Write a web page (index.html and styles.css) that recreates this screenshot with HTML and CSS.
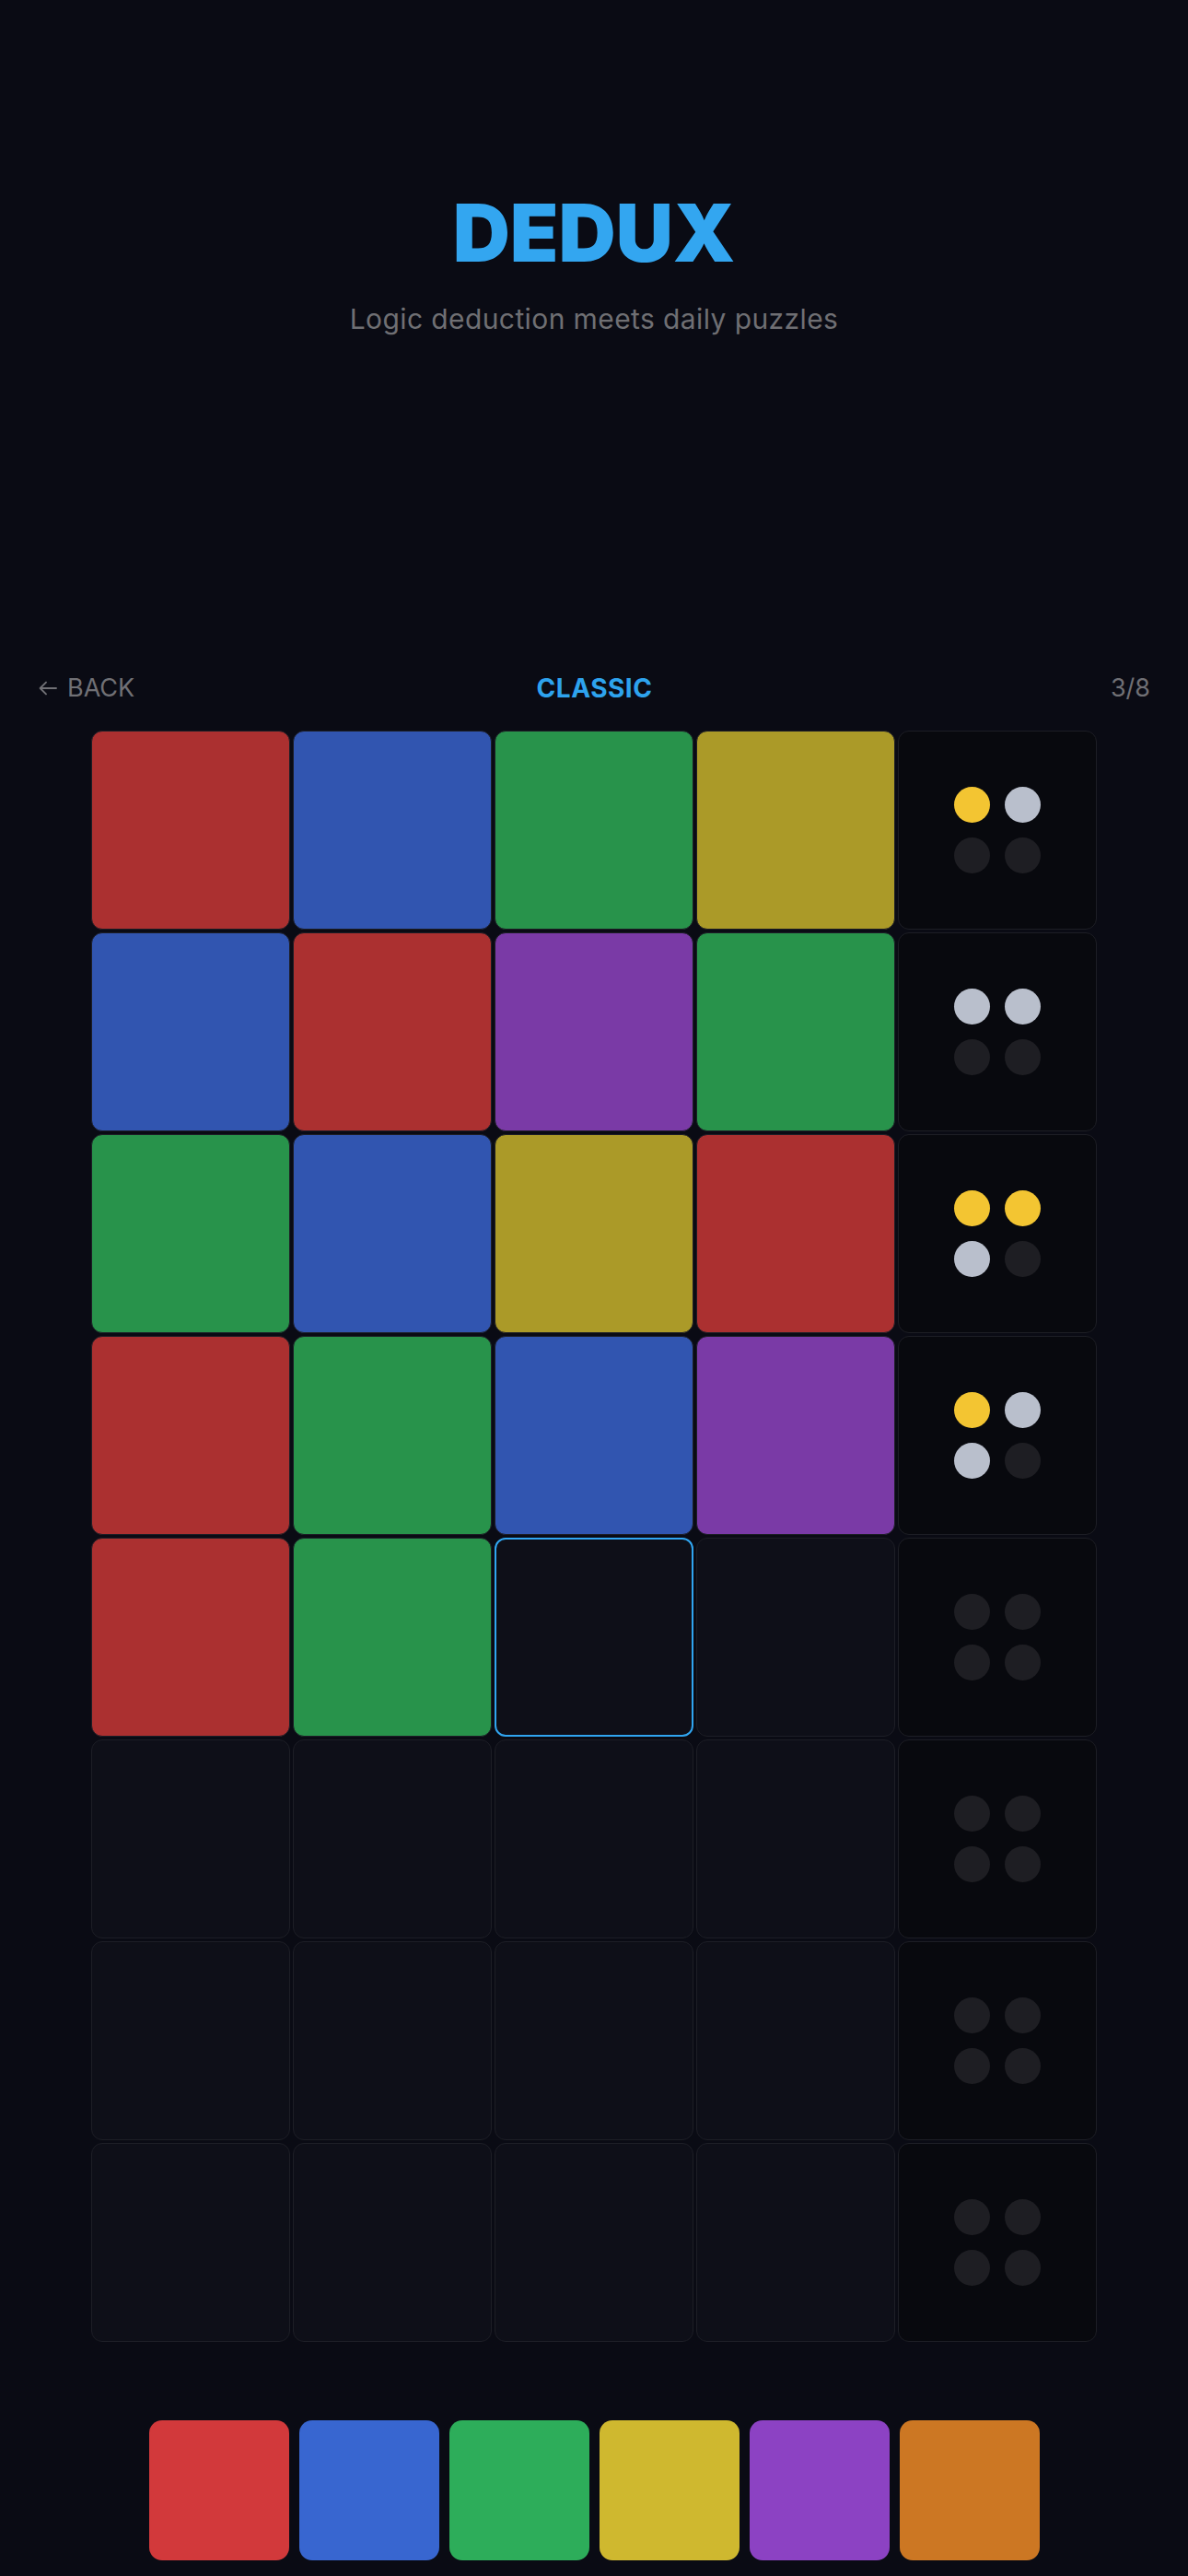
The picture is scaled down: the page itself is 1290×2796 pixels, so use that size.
FILE: index.html
```
<!DOCTYPE html>
<html lang="en">
<head>
<meta charset="utf-8">
<title>DEDUX</title>
<link rel="stylesheet" href="styles.css">
</head>
<body>
<main class="app">
  <header class="hero">
    <h1 class="title">DEDUX</h1>
    <p class="subtitle">Logic deduction meets daily puzzles</p>
  </header>

  <nav class="topbar">
    <span class="back">
      <svg class="back-icon" viewBox="0 0 20 16" width="20" height="16" aria-hidden="true">
        <path d="M19 8H1.8M8 1.6L1.6 8L8 14.4" fill="none" stroke="currentColor" stroke-width="1.9" stroke-linecap="round" stroke-linejoin="round"/>
      </svg>
      BACK
    </span>
    <span class="mode">CLASSIC</span>
    <span class="progress">3/8</span>
  </nav>

  <section class="board">
    <div class="cell red"></div><div class="cell blue"></div><div class="cell green"></div><div class="cell yellow"></div>
    <div class="feedback"><span class="dot exact"></span><span class="dot near"></span><span class="dot"></span><span class="dot"></span></div>

    <div class="cell blue"></div><div class="cell red"></div><div class="cell purple"></div><div class="cell green"></div>
    <div class="feedback"><span class="dot near"></span><span class="dot near"></span><span class="dot"></span><span class="dot"></span></div>

    <div class="cell green"></div><div class="cell blue"></div><div class="cell yellow"></div><div class="cell red"></div>
    <div class="feedback"><span class="dot exact"></span><span class="dot exact"></span><span class="dot near"></span><span class="dot"></span></div>

    <div class="cell red"></div><div class="cell green"></div><div class="cell blue"></div><div class="cell purple"></div>
    <div class="feedback"><span class="dot exact"></span><span class="dot near"></span><span class="dot near"></span><span class="dot"></span></div>

    <div class="cell red"></div><div class="cell green"></div><div class="cell empty selected"></div><div class="cell empty"></div>
    <div class="feedback"><span class="dot"></span><span class="dot"></span><span class="dot"></span><span class="dot"></span></div>

    <div class="cell empty"></div><div class="cell empty"></div><div class="cell empty"></div><div class="cell empty"></div>
    <div class="feedback"><span class="dot"></span><span class="dot"></span><span class="dot"></span><span class="dot"></span></div>

    <div class="cell empty"></div><div class="cell empty"></div><div class="cell empty"></div><div class="cell empty"></div>
    <div class="feedback"><span class="dot"></span><span class="dot"></span><span class="dot"></span><span class="dot"></span></div>

    <div class="cell empty"></div><div class="cell empty"></div><div class="cell empty"></div><div class="cell empty"></div>
    <div class="feedback"><span class="dot"></span><span class="dot"></span><span class="dot"></span><span class="dot"></span></div>
  </section>

  <div class="palette">
    <span class="swatch s-red"></span>
    <span class="swatch s-blue"></span>
    <span class="swatch s-green"></span>
    <span class="swatch s-yellow"></span>
    <span class="swatch s-purple"></span>
    <span class="swatch s-orange"></span>
  </div>
</main>
</body>
</html>
```

FILE: styles.css
```
* { box-sizing: border-box; }

html, body {
  margin: 0;
  padding: 0;
  background: #0a0b14;
}

body {
  font-family: Inter, "Noto Sans", "Liberation Sans", sans-serif;
  color: #6f6f75;
}

.app {
  width: 1290px;
  height: 2796px;
  overflow: hidden;
  display: flex;
  flex-direction: column;
}

.hero {
  padding-top: 211px;
  text-align: center;
}

.title {
  margin: 0;
  font-size: 86px;
  line-height: 85px;
  font-weight: 900;
  color: #33a6f0;
  letter-spacing: 0;
}

.subtitle {
  margin: 32px 0 0;
  font-size: 30px;
  line-height: 36px;
  font-weight: 400;
  letter-spacing: 0.4px;
  color: #6f6f73;
}

.topbar {
  margin-top: 367px;
  padding: 0 41px 0 42px;
  height: 32px;
  display: flex;
  align-items: center;
  justify-content: space-between;
  font-size: 27px;
  line-height: 32px;
}

.back {
  display: flex;
  align-items: center;
  gap: 11px;
  color: #707075;
  width: 140px;
}

.back-icon { display: block; }

.mode {
  color: #2ea3ee;
  font-weight: 700;
  font-size: 28px;
  letter-spacing: 0.5px;
}

.progress {
  width: 140px;
  text-align: right;
  color: #707075;
}

.board {
  margin-top: 30px;
  display: grid;
  grid-template-columns: repeat(5, 216px);
  grid-auto-rows: 216px;
  gap: 3px;
  justify-content: center;
}

.cell {
  border-radius: 12px;
  border: 1px solid #1d1e26;
}

.red { background: #ab3030; }
.blue { background: #3155b0; }
.green { background: #28934b; }
.yellow { background: #ab9a28; }
.purple { background: #7a3aa6; }

.empty { background: #0e0f18; }

.selected {
  border: 2px solid #30a5f0;
}

.feedback {
  border-radius: 12px;
  border: 1px solid #1d1e25;
  background: #08090e;
  display: grid;
  grid-template-columns: repeat(2, 39px);
  grid-template-rows: repeat(2, 39px);
  gap: 16px;
  justify-content: center;
  align-content: center;
}

.dot {
  width: 39px;
  height: 39px;
  border-radius: 50%;
  background: #1e1e23;
}

.dot.exact { background: #f3c532; }
.dot.near { background: #b9bfcc; }

.palette {
  margin-top: 85px;
  display: flex;
  justify-content: center;
  gap: 11px;
}

.swatch {
  width: 152px;
  height: 152px;
  border-radius: 14px;
}

.s-red { background: #d2393b; }
.s-blue { background: #3866d0; }
.s-green { background: #2dad5a; }
.s-yellow { background: #cfb82f; }
.s-purple { background: #8c42c3; }
.s-orange { background: #cc7723; }
```
